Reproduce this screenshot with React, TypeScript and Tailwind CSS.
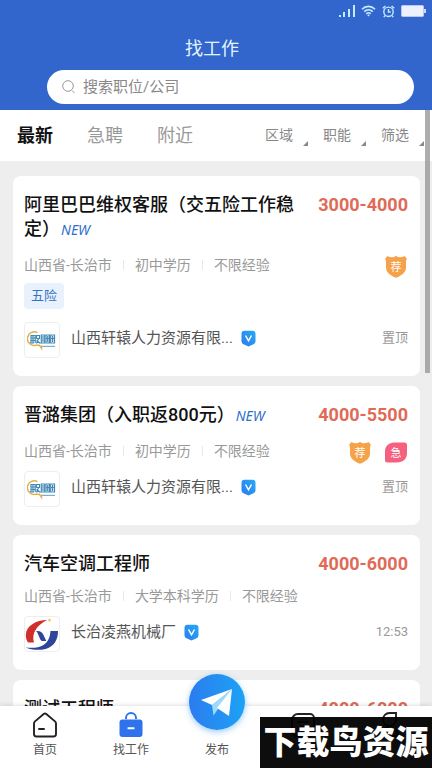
import React from 'react';

type BadgeKind = 'recommend' | 'urgent';

interface Job {
  id: number;
  title: string;
  isNew?: boolean;
  salary: string;
  meta: string[];
  badges?: BadgeKind[];
  tags?: string[];
  logo: 'bubble' | 'cy';
  company: string;
  time: string;
}

const jobs: Job[] = [
  {
    id: 1,
    title: '阿里巴巴维权客服（交五险工作稳定）',
    isNew: true,
    salary: '3000-4000',
    meta: ['山西省-长治市', '初中学历', '不限经验'],
    badges: ['recommend'],
    tags: ['五险'],
    logo: 'bubble',
    company: '山西轩辕人力资源有限...',
    time: '置顶',
  },
  {
    id: 2,
    title: '晋潞集团（入职返800元）',
    isNew: true,
    salary: '4000-5500',
    meta: ['山西省-长治市', '初中学历', '不限经验'],
    badges: ['recommend', 'urgent'],
    logo: 'bubble',
    company: '山西轩辕人力资源有限...',
    time: '置顶',
  },
  {
    id: 3,
    title: '汽车空调工程师',
    salary: '4000-6000',
    meta: ['山西省-长治市', '大学本科学历', '不限经验'],
    logo: 'cy',
    company: '长治凌燕机械厂',
    time: '12:53',
  },
  {
    id: 4,
    title: '测试工程师',
    salary: '4000-6000',
    meta: ['山西省-长治市', '大学本科学历', '不限经验'],
    logo: 'cy',
    company: '长治凌燕机械厂',
    time: '12:53',
  },
];

function StatusBar() {
  return (
    <div className="flex h-[22px] items-center justify-end gap-1.5 pr-1.5 text-[#c4ecff]">
      <svg width="16" height="12" viewBox="0 0 16 12" fill="currentColor">
        <rect x="0" y="10" width="2" height="2" />
        <rect x="4" y="7" width="2" height="5" />
        <rect x="9" y="4" width="2" height="8" />
        <rect x="14" y="0" width="2" height="12" />
      </svg>
      <svg width="15" height="12" viewBox="0 0 14 12" fill="none" stroke="currentColor" strokeWidth="1.6">
        <path d="M0.5 4.2C4.2 0.4 9.8 0.4 13.5 4.2" />
        <path d="M2.7 6.6c2.5-2.5 6.1-2.5 8.6 0" />
        <path d="M4.8 8.8c1.3-1.2 3.1-1.2 4.4 0" />
        <path d="M7 11.6L5.6 10.1c.8-.7 2-.7 2.8 0z" fill="currentColor" stroke="none" />
      </svg>
      <svg width="13" height="13" viewBox="0 0 13 13" fill="none" stroke="currentColor" strokeWidth="1.4">
        <circle cx="6.5" cy="6.8" r="4.7" />
        <path d="M6.5 4v3h2.2M0.8 3.2L3.4 0.9M12.2 3.2L9.6 0.9M3 10.6l-1.2 1.5M10 10.6l1.2 1.5" />
      </svg>
      <svg width="25" height="12" viewBox="0 0 25 12">
        <rect x="0.5" y="0.5" width="22" height="11" rx="1" fill="#edf0fd" stroke="#b9c7f2" />
        <rect x="23" y="4" width="2" height="4" fill="#cdd7f7" />
      </svg>
    </div>
  );
}

function Badge({ kind }: { kind: BadgeKind }) {
  if (kind === 'urgent') {
    return (
      <svg width="24" height="24" viewBox="0 0 24 24" role="img" aria-label="急">
        <path d="M10 1.5h10.500a2.5 2.5 0 0 1 2.5 2.5V12c0 6-4 9.500-10 9.500H3.5A2.5 2.5 0 0 1 1 19V10.500C1 5 5 1.500 10 1.500z" fill="#f5607f" />
        <text x="12" y="15.5" fontSize="11" textAnchor="middle" fill="#fff">急</text>
      </svg>
    );
  }
  return (
    <svg width="24" height="24" viewBox="0 0 24 24" role="img" aria-label="荐">
      <path d="M12 .8c1.5 1.2 3 1.7 4.8 1.5 1.6-.2 3-.6 4.2-1.2.4 1.2 1 2 2 2.7-.7 1-1 2-1 3.200v5.500c0 5-4.500 8-10 10.300C6.500 20.500 2 17.500 2 12.500V7C2 5.800 1.700 4.800 1 3.800c1-.7 1.600-1.500 2-2.700 1.200.6 2.600 1 4.200 1.200C9 2.500 10.500 2 12 .8z" fill="#f5a24a" />
      <text x="12" y="16" fontSize="11" textAnchor="middle" fill="#fff">荐</text>
    </svg>
  );
}

function BubbleLogo() {
  return (
    <svg width="30" height="22" viewBox="0 0 30 22" fill="none">
      <path d="M10.5 3.7A6.8 6.8 0 1 0 9 16.2h3.2l2.3 3.2-.2-3" stroke="#e2b04e" strokeWidth="1.4" />
      <g stroke="#4389b5" strokeWidth="1.2">
        <path d="M3.5 6.5h5M3.5 9h5M3.5 11.5h5M4 6v8M6 6v8M8.2 6v8M3 14h4" />
        <path d="M9.5 6.5h3v3h-3zM9.5 11.5l4 3M11.5 9.5l-2 5" />
        <path d="M14.3 6h3.4v8h-3.4zM16 7v6" />
        <path d="M19 6h3.4v8H19zM20.700 7v6M19 9.500h3.400" />
        <path d="M23.700 6h3.800v8h-3.800zM25.600 7v6M23.700 9.500h3.800" />
      </g>
      <path d="M15 17.400h13" stroke="#7ab0ce" strokeWidth="1.2" />
    </svg>
  );
}

function CyLogo() {
  return (
    <svg width="34" height="34" viewBox="0 0 34 34">
      <path d="M22 3C11 3 1 9 .8 18c0 3.500 1 6 2.400 7.500H9C6.500 17 11 8.500 22 3z" fill="#d0302c" />
      <path d="M11 14c4-.5 6 .8 7.500 4l2.800 6h-3.500c-1.300 0-2-.6-2.600-1.800L13 17c-.5-1.200-1-2.200-2-3z" fill="#2f459b" />
      <path d="M25.500 14H33c.2 9-4.500 16-12.500 18C14 33.500 6 33 .5 30.500c7 .8 13.500.300 18-2.500 4.500-3 6.500-7.500 7-14z" fill="#2f459b" />
      <path d="M24.500 1l.6 1.200 1.400.2-1 1 .2 1.400-1.200-.6-1.300.6.3-1.400-1-1 1.400-.2z" fill="#e9cf63" />
    </svg>
  );
}

function VerifiedIcon() {
  return (
    <svg className="shrink-0" width="15" height="17" viewBox="0 0 15 17">
      <defs>
        <linearGradient id="verified" x1="0" y1="1" x2="1" y2="0">
          <stop offset="0" stopColor="#2b7cf0" />
          <stop offset="1" stopColor="#27a9f5" />
        </linearGradient>
      </defs>
      <path d="M3.5.8h8A3 3 0 0 1 14.5 3.8V11c0 1.5-.8 2.6-2 3.3L7.5 16.6l-5-2.3C1.3 13.6.5 12.5.5 11V3.8A3 3 0 0 1 3.5.8z" fill="url(#verified)" />
      <path d="M4.5 5.500l3 5.300 3-5.300" fill="none" stroke="#fff" strokeWidth="1.500" />
    </svg>
  );
}

function JobCard({ job }: { job: Job }) {
  return (
    <article className="rounded-lg bg-white pt-[17px] pr-3 pb-[18px] pl-[11px]">
      <div className="flex items-start gap-4">
        <h2 className="min-w-0 flex-1 text-[18px] leading-6 font-medium text-[#111]">
          {job.title}
          {job.isNew && (
            <em className="ml-px font-['Noto_Sans'] text-[14px] leading-5 font-normal text-[#2f6fcb]">NEW</em>
          )}
        </h2>
        <span className="text-[18px] leading-6 font-bold text-[#df6b57]">{job.salary}</span>
      </div>

      <div className={job.badges ? 'mt-2.5 flex justify-between pt-1' : 'mt-2.5 flex justify-between'}>
        <ul className="flex h-5 items-center text-[14px] leading-5 text-[#999]">
          {job.meta.map((item, i) => (
            <li key={item} className="flex items-center">
              {i > 0 && <span className="mx-[11px] h-2.5 w-px bg-[#e8e8e8]" />}
              {item}
            </li>
          ))}
        </ul>
        {job.badges && (
          <div className="-mb-1 flex gap-3">
            {job.badges.map((kind) => (
              <Badge key={kind} kind={kind} />
            ))}
          </div>
        )}
      </div>

      {job.tags && (
        <div className="mt-2 flex gap-2">
          {job.tags.map((tag) => (
            <span key={tag} className="rounded-sm bg-[#e9f1fd] px-[7px] text-[13px] leading-[26px] text-[#3273c4]">
              {tag}
            </span>
          ))}
        </div>
      )}

      <div className={job.tags ? 'mt-[13px] flex items-center' : 'mt-2.5 flex items-center'}>
        <div className="flex size-9 shrink-0 items-center justify-center rounded-sm border border-[#eee]">
          {job.logo === 'bubble' ? <BubbleLogo /> : <CyLogo />}
        </div>
        <div className="flex flex-1 items-center pb-1 pl-[11px]">
          <span className="text-[15px] leading-5 text-[#555]">{job.company}</span>
          <span className="ml-2">
            <VerifiedIcon />
          </span>
          <span className="ml-auto text-[13px] leading-5 text-[#999]">{job.time}</span>
        </div>
      </div>
    </article>
  );
}

function NavBar() {
  const item = 'flex flex-1 flex-col items-center gap-1 pt-1.5 text-[12px] leading-4 text-[#555]';
  return (
    <nav className="relative flex h-[62px] shrink-0 bg-white pl-0.5 shadow-[0_-1px_4px_rgba(0,0,0,0.12)]">
      <a href="#home" className={item}>
        <svg width="26" height="26" viewBox="0 0 26 26" fill="none" stroke="#222" strokeWidth="1.900" strokeLinecap="round" strokeLinejoin="round">
          <path d="M2 11.500c0-.9.300-1.500 1-2.100L11.700 2c.8-.7 1.800-.7 2.600 0L23 9.400c.7.6 1 1.200 1 2.100V22a2.500 2.500 0 0 1-2.500 2.500h-17A2.500 2.500 0 0 1 2 22z" />
          <path d="M7 17h5" />
        </svg>
        首页
      </a>
      <a href="#jobs" className={item}>
        <svg width="26" height="26" viewBox="0 0 26 26">
          <path d="M8 7V6a5 5 0 0 1 10 0v1" fill="none" stroke="#2e72ec" strokeWidth="1.900" />
          <rect x="1.500" y="7.500" width="23" height="17.500" rx="3" fill="#2e72ec" />
          <rect x="9.500" y="15.200" width="7" height="2" rx=".5" fill="#fff" />
        </svg>
        找工作
      </a>
      <a href="#publish" className={item}>
        {/* Raised publish button */}
        <span className="-mt-[38px] mb-2 flex size-14 items-center justify-center rounded-full bg-linear-to-r from-[#2b7ced] to-[#1ba2f6] shadow-[0_2px_6px_rgba(40,140,245,0.45)]">
          <svg width="34" height="32" viewBox="0 0 34 32">
            <path d="M32 3L12 19l1.500 10.500L18 23z" fill="#9fd9fb" />
            <path d="M32 3L1 14l11 5z" fill="#fff" />
            <path d="M32 3L17 22l12 8z" fill="#fff" />
          </svg>
        </span>
        发布
      </a>
      <a href="#message" aria-label="消息" className={item}>
        <svg width="26" height="26" viewBox="0 0 26 26" fill="none" stroke="#222" strokeWidth="1.900" strokeLinecap="round">
          <path d="M8 2h12a4 4 0 0 1 4 4v14a4 4 0 0 1-4 4H6a4 4 0 0 1-4-4V8a6 6 0 0 1 6-6z" />
          <path d="M8 10h10M10 15h6" />
        </svg>
      </a>
      <a href="#mine" aria-label="我的" className={item}>
        <svg width="26" height="26" viewBox="0 0 26 26" fill="none" stroke="#222" strokeWidth="1.900">
          <path d="M20 1v6.500a6.500 6.500 0 1 1-13 0A6.500 6.500 0 0 1 13.500 1z" />
          <path d="M4 24c0-6 4-9 9-9s9 3 9 9z" />
        </svg>
      </a>
    </nav>
  );
}

export default function App() {
  return (
    <div className="relative flex h-screen flex-col overflow-hidden bg-[#eee] font-[Roboto,'Noto_Sans_CJK_SC',sans-serif]">
      {/* Header */}
      <header className="shrink-0 bg-[#3366cc] pb-1.5">
        <StatusBar />
        <h1 className="mt-3.5 pr-2 text-center text-[18px] leading-[26px] text-[#e2f5ff]">找工作</h1>
        <label className="mt-2 mr-[18px] ml-[47px] flex h-[34px] items-center gap-2 rounded-full bg-white pl-[15px]">
          <svg width="13" height="14" viewBox="0 0 13 14" fill="none" stroke="#999" strokeWidth="1">
            <circle cx="6" cy="6" r="5.300" />
            <path d="M10 10.500l2.500 2.500" />
          </svg>
          <input
            type="search"
            aria-label="搜索职位/公司"
            placeholder="搜索职位/公司"
            className="min-w-0 flex-1 bg-transparent text-[15px] outline-none placeholder:text-[#888]"
          />
        </label>
      </header>

      {/* Tabs and filters */}
      <div className="flex h-[51px] shrink-0 items-center justify-between bg-white pr-2 pl-[17px]">
        <div className="flex gap-[34px] text-[18px] text-[#999]">
          <button type="button" className="font-bold text-[#111]">最新</button>
          <button type="button">急聘</button>
          <button type="button">附近</button>
        </div>
        <div className="flex gap-[15px] text-[14px] text-[#888]">
          {['区域', '职能', '筛选'].map((name) => (
            <button key={name} type="button" className="flex items-end gap-2.5">
              {name}
              <svg width="5" height="5" viewBox="0 0 5 5">
                <path d="M5 0v5H0z" fill="#888" />
              </svg>
            </button>
          ))}
        </div>
      </div>

      {/* Job list */}
      <main className="min-h-0 flex-1 overflow-hidden pt-[15px] pr-3 pl-[13px]">
        <div className="flex flex-col gap-2.5">
          {jobs.map((job) => (
            <JobCard key={job.id} job={job} />
          ))}
        </div>
      </main>

      <NavBar />

      {/* Scroll thumb */}
      <div className="absolute top-[110px] right-0.5 h-[263px] w-[5px] bg-[#999]/80" />

      {/* Site mark */}
      <div className="absolute right-0 bottom-0 flex h-[51px] w-[172px] items-center justify-center bg-black/95 text-[33px] leading-none font-black whitespace-nowrap text-white">
        下载鸟资源
      </div>
    </div>
  );
}
